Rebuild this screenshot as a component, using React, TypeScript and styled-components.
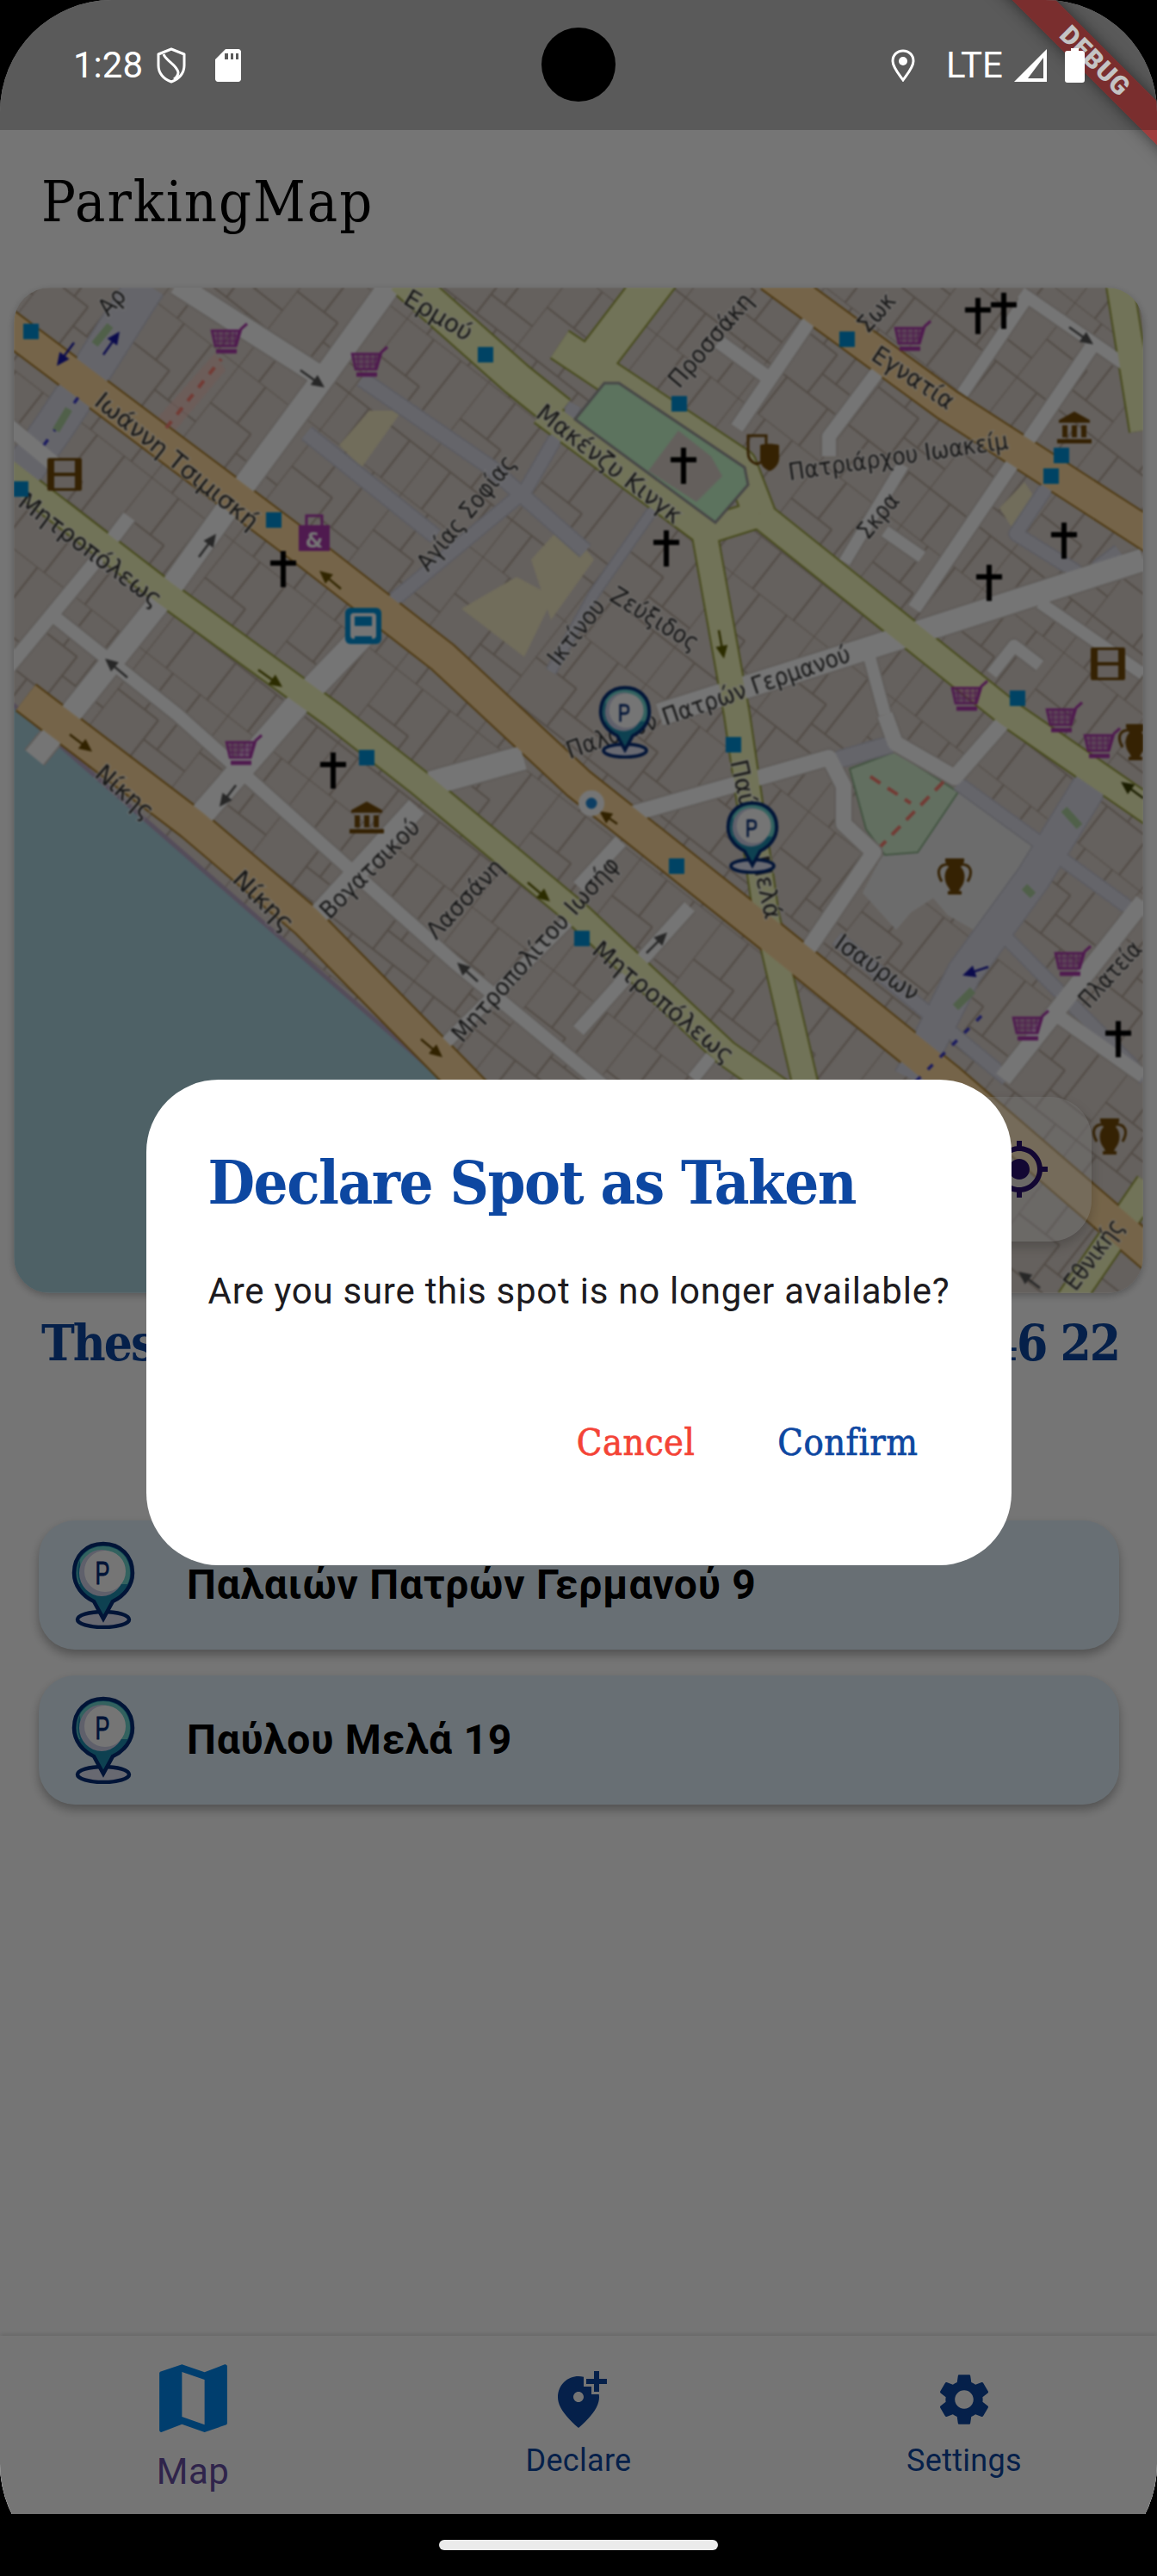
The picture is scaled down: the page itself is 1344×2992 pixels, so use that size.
import React from "react";
import styled, { createGlobalStyle } from "styled-components";

const Global = createGlobalStyle`
  html, body { margin: 0; padding: 0; background: #000; }
  #root { width: 1344px; height: 2992px; }
  * { box-sizing: border-box; }
`;

const SLAB = `"DejaVu Serif Condensed", "DejaVu Serif", serif`;
const NAVY = "#0d47a1";

const Screen = styled.div`
  position: relative;
  width: 1344px;
  height: 2992px;
  overflow: hidden;
  border-radius: 130px;
  background: #000;
  font-family: Roboto, sans-serif;
`;
const Page = styled.div`
  width: 100%;
  height: 2920px;
  padding-top: 151px;
  background: #fff;
  display: flex;
  flex-direction: column;
`;
const AppBar = styled.header`
  height: 168px;
  flex: none;
  padding-left: 48px;
  display: flex;
  align-items: center;
`;
const AppTitle = styled.h1`
  margin: 0;
  font: 400 66px/1 ${SLAB};
  letter-spacing: 2px;
  color: #000;
`;
const MapCard = styled.section`
  position: relative;
  flex: none;
  height: 1168px;
  margin: 15px 16px 0;
  border-radius: 42px;
  overflow: hidden;
  box-shadow: 0 3px 9px rgba(0, 0, 0, 0.25);
`;
const MapSvg = styled.svg`
  display: block;
  width: 1312px;
  height: 1168px;
  filter: blur(0.9px);
`;
const LocateButton = styled.button`
  position: absolute;
  right: 60px;
  bottom: 60px;
  width: 168px;
  height: 168px;
  padding: 0;
  border: 0;
  border-radius: 48px;
  background: rgba(255, 255, 255, 0.38);
  box-shadow: 0 6px 14px rgba(0, 0, 0, 0.2);
  display: flex;
  align-items: center;
  justify-content: center;
  color: #2a1070;
`;
const Headline = styled.h2`
  margin: 22px 44px 0 48px;
  font: 700 58px/72px ${SLAB};
  letter-spacing: -2px;
  color: ${NAVY};
  white-space: nowrap;
  display: flex;
  justify-content: space-between;
`;
const SpotList = styled.ul`
  list-style: none;
  margin: 170px 44px 0 45px;
  padding: 0;
  display: flex;
  flex-direction: column;
  gap: 30px;
`;
const SpotCard = styled.li`
  height: 150px;
  border-radius: 42px;
  background: #e3f2fd;
  box-shadow: 0 6px 12px rgba(0, 0, 0, 0.3);
  padding-left: 38px;
  display: flex;
  align-items: center;
  gap: 60px;
`;
const SpotName = styled.span`
  font: 700 48px/1 Roboto, sans-serif;
  letter-spacing: 0.72px;
  color: #000;
`;
const Grow = styled.div`
  flex: 1;
`;
const BottomNav = styled.nav`
  flex: none;
  height: 207px;
  background: #fff;
  box-shadow: 0 -2px 5px rgba(0, 0, 0, 0.12);
  display: grid;
  grid-template-columns: repeat(3, 1fr);
`;
const NavItem = styled.div<{ $active?: boolean }>`
  display: flex;
  flex-direction: column;
  align-items: center;
  padding-top: ${(p) => (p.$active ? "20px" : "38px")};
  gap: ${(p) => (p.$active ? "9px" : "15px")};
  color: ${NAVY};
`;
const NavLabel = styled.span<{ $active?: boolean }>`
  font: 400 ${(p) => (p.$active ? "42px" : "36px")}/1.15 Roboto, sans-serif;
  letter-spacing: ${(p) => (p.$active ? "0.4px" : "0.3px")};
  color: ${(p) => (p.$active ? "#6750a4" : NAVY)};
`;
const Scrim = styled.div`
  position: absolute;
  inset: 0;
  padding: 151px 0 72px;
  background: rgba(0, 0, 0, 0.54);
  display: flex;
  align-items: center;
  justify-content: center;
`;
const Dialog = styled.div`
  width: 1005px;
  height: 564px;
  border-radius: 84px;
  background: #fff;
  padding: 72px 36px 0 72px;
  display: flex;
  flex-direction: column;
`;
const DialogTitle = styled.h3`
  margin: 0;
  font: 700 70px/96px ${SLAB};
  letter-spacing: -1.5px;
  color: ${NAVY};
  white-space: nowrap;
`;
const DialogBody = styled.p`
  margin: 48px 0 0;
  font: 400 42px/60px Roboto, sans-serif;
  letter-spacing: 0.75px;
  color: #1d1b20;
  white-space: nowrap;
`;
const Actions = styled.div`
  margin-top: 86px;
  padding-right: 36px;
  display: flex;
  justify-content: flex-end;
  gap: 24px;
`;
const ActionButton = styled.button<{ $danger?: boolean }>`
  height: 120px;
  padding: 0 36px;
  border: 0;
  background: none;
  font: 400 43px/1 ${SLAB};
  letter-spacing: 0.5px;
  -webkit-text-stroke: 0.7px currentColor;
  color: ${(p) => (p.$danger ? "#f44336" : NAVY)};
`;
const DebugBanner = styled.div`
  position: absolute;
  left: 1122px;
  top: 53px;
  width: 300px;
  height: 36px;
  transform: rotate(45deg);
  background: rgba(183, 28, 28, 0.63);
  box-shadow: 0 0 18px rgba(0, 0, 0, 0.5);
  color: #fff;
  font: 900 30px/36px Roboto, sans-serif;
  letter-spacing: 1px;
  text-align: center;
`;
const StatusBar = styled.div`
  position: absolute;
  left: 0;
  top: 0;
  width: 100%;
  height: 151px;
  padding: 0 84px 0 85px;
  background: rgba(0, 0, 0, 0.23);
  display: flex;
  align-items: center;
  justify-content: space-between;
  color: #fff;
`;
const StatusGroup = styled.div`
  display: flex;
  align-items: center;
  height: 151px;
`;
const StatusText = styled.span<{ $ml?: number }>`
  margin-left: ${(p) => p.$ml || 0}px;
  font: 400 42px/1 Roboto, sans-serif;
  color: #fff;
`;
const StatusIcon = styled.svg<{ $ml: number }>`
  display: block;
  margin-left: ${(p) => p.$ml}px;
  flex: none;
`;
const Camera = styled.div`
  position: absolute;
  left: 629px;
  top: 32px;
  width: 86px;
  height: 86px;
  border-radius: 50%;
  background: #000;
`;
const SystemNav = styled.div`
  position: absolute;
  left: 0;
  bottom: 0;
  width: 100%;
  height: 72px;
  display: flex;
  justify-content: center;
  padding-top: 30px;
`;
const HomePill = styled.div`
  width: 324px;
  height: 12px;
  border-radius: 6px;
  background: #ebebeb;
`;

type Pt = number[];
const roadColors: Record<string, { fill: string; edge: string }> = {
  ped: { fill: "#dddde8", edge: "#c9c9d4" },
  white: { fill: "#ffffff", edge: "#cfc8c2" },
  sec: { fill: "#f7fabf", edge: "#98a03a" },
  pri: { fill: "#ffdba0", edge: "#a87a25" },
};
const roads: { k: string; w: number; p: Pt }[] = [
  { k: "ped", w: 44, p: [170, 330, 100, 440, 60, 500, 10, 570] },
  { k: "ped", w: 16, p: [420, 440, 570, 543, 680, 640] },
  { k: "ped", w: 16, p: [356, 503, 506, 623] },
  { k: "ped", w: 14, p: [668, 470, 610, 570, 450, 703, 430, 730] },
  { k: "ped", w: 10, p: [760, 590, 690, 690, 640, 780] },
  { k: "ped", w: 18, p: [972, 883, 1040, 863] },
  { k: "ped", w: 14, p: [1113, 910, 1315, 1057] },
  { k: "ped", w: 38, p: [1272, 903, 1200, 1020, 1120, 1130, 1058, 1253] },
  { k: "ped", w: 14, p: [1150, 1070, 1330, 1253] },
  { k: "ped", w: 14, p: [972, 1090, 1070, 1170, 1170, 1253] },
  { k: "ped", w: 14, p: [1220, 560, 1180, 620, 1260, 670, 1300, 640] },
  { k: "white", w: 24, p: [205, 330, 377, 440] },
  { k: "white", w: 26, p: [454, 330, 377, 437, 279, 570, 193, 690, 81, 830, 40, 880] },
  { k: "white", w: 16, p: [10, 775, 107, 657, 150, 600] },
  { k: "white", w: 18, p: [10, 495, 70, 545] },
  { k: "white", w: 15, p: [64, 717, 206, 830, 407, 1010, 527, 1117, 643, 1213, 700, 1260] },
  { k: "white", w: 28, p: [429, 730, 356, 806, 231, 950] },
  { k: "white", w: 24, p: [484, 937, 360, 1073] },
  { k: "white", w: 14, p: [514, 1215, 660, 1070] },
  { k: "white", w: 28, p: [500, 910, 608, 880] },
  { k: "white", w: 18, p: [728, 947, 963, 880, 980, 913, 980, 957, 1015, 990, 929, 1117] },
  { k: "white", w: 26, p: [766, 830, 1058, 737, 1328, 650] },
  { k: "white", w: 18, p: [1028, 830, 1040, 863, 1109, 903, 1173, 830] },
  { k: "white", w: 20, p: [1328, 1047, 1165, 1253] },
  { k: "white", w: 16, p: [1229, 1180, 1328, 1250] },
  { k: "white", w: 16, p: [942, 370, 856, 497] },
  { k: "white", w: 16, p: [835, 397, 890, 437] },
  { k: "white", w: 16, p: [1023, 427, 963, 507, 963, 530] },
  { k: "white", w: 16, p: [1268, 403, 1062, 707] },
  { k: "white", w: 14, p: [1190, 350, 1118, 457] },
  { k: "white", w: 14, p: [1186, 340, 1306, 423] },
  { k: "white", w: 14, p: [1049, 540, 981, 653] },
  { k: "white", w: 14, p: [1028, 617, 1071, 647] },
  { k: "white", w: 14, p: [1208, 700, 1328, 783] },
  { k: "white", w: 14, p: [1208, 773, 1178, 750, 1152, 783] },
  { k: "white", w: 14, p: [1010, 763, 1028, 830] },
  { k: "white", w: 16, p: [801, 1053, 672, 1197] },
  { k: "white", w: 16, p: [721, 977, 672, 1030] },
  { k: "white", w: 14, p: [826, 1227, 805, 1253] },
  { k: "sec", w: 28, p: [5, 545, 193, 690, 386, 830, 488, 910, 672, 1063, 843, 1223, 910, 1270] },
  { k: "sec", w: 38, p: [467, 322, 600, 440, 650, 480] },
  { k: "sec", w: 36, p: [650, 400, 860, 540, 882, 597] },
  { k: "sec", w: 30, p: [630, 478, 818, 617, 882, 597] },
  { k: "sec", w: 30, p: [882, 597, 1173, 830, 1340, 945] },
  { k: "sec", w: 28, p: [818, 617, 856, 830, 890, 1063, 938, 1270] },
  { k: "sec", w: 44, p: [690, 420, 770, 315] },
  { k: "sec", w: 30, p: [1300, 325, 1328, 500] },
  { k: "sec", w: 30, p: [1243, 1510, 1335, 1375] },
  { k: "pri", w: 36, p: [0, 372, 334, 623, 514, 763, 672, 910, 886, 1080, 1100, 1253, 1340, 1460] },
  { k: "pri", w: 36, p: [895, 320, 1100, 470, 1340, 625] },
  { k: "pri", w: 36, p: [30, 810, 223, 957, 356, 1070, 536, 1253, 640, 1360] },
];
const toPts = (p: Pt) => {
  const out: string[] = [];
  for (let i = 0; i < p.length; i += 2) out.push(`${p[i]},${p[i + 1]}`);
  return out.join(" ");
};
const labels: [string, number, number, number, number][] = [
  ["Ιωάννη Τσιμισκή", 113, 463, 296, 610],
  ["Μητροπόλεως", 24, 580, 184, 700],
  ["Ερμού", 471, 345, 546, 390],
  ["Αγίας Σοφίας", 491, 660, 594, 533],
  ["Αρ", 120, 363, 142, 340],
  ["Μακένζυ Κινγκ", 626, 477, 788, 603],
  ["Προσσάκη", 783, 447, 870, 345],
  ["Σωκ", 1002, 383, 1036, 345],
  ["Εγνατία", 1015, 410, 1105, 470],
  ["Πατριάρχου Ιωακείμ", 916, 550, 1171, 513],
  ["Σκρα", 1002, 623, 1040, 577],
  ["Ζεύξιδος", 711, 690, 809, 750],
  ["Ικτίνου", 643, 770, 698, 700],
  ["Παλαιών Πατρών Γερμανού", 659, 874, 987, 760],
  ["Παύλου Μελά", 856, 883, 897, 1067],
  ["Νίκης", 114, 895, 174, 947],
  ["Νίκης", 274, 1017, 336, 1078],
  ["Βογατσικού", 377, 1063, 484, 957],
  ["Λασσάνη", 501, 1087, 581, 1003],
  ["Μητροπολίτου Ιωσήφ", 531, 1207, 715, 1000],
  ["Μητροπόλεως", 691, 1100, 848, 1230],
  ["Ισαύρων", 972, 1093, 1064, 1157],
  ["Πλατεία", 1259, 1167, 1322, 1098],
  ["Εθνικής", 1243, 1496, 1300, 1420],
];
const stops = [
  [36, 385], [564, 412], [318, 604], [984, 394], [789, 469], [1233, 529], [1221, 553],
  [1182, 811], [426, 880], [852, 865], [786, 1006], [676, 1090], [24, 568],
];
const carts = [[266, 395], [429, 422], [1060, 392], [1126, 810], [1236, 835], [283, 873], [1280, 865], [1246, 1118], [1197, 1193]];
const crosses = [[329, 661], [794, 541], [774, 637], [1136, 367], [1166, 361], [1236, 628], [1149, 677], [387, 895], [1299, 1207]];
const arrows: { c: string; p: Pt }[] = [
  { c: "#1a1aa8", p: [86, 398, 66, 425] },
  { c: "#1a1aa8", p: [120, 412, 139, 385] },
  { c: "#555", p: [349, 430, 377, 450] },
  { c: "#555", p: [231, 647, 251, 620] },
  { c: "#555", p: [148, 787, 122, 765] },
  { c: "#6b5200", p: [396, 684, 371, 663] },
  { c: "#5f6000", p: [300, 778, 328, 798] },
  { c: "#555", p: [1242, 380, 1270, 400] },
  { c: "#5f6000", p: [835, 732, 841, 765] },
  { c: "#6b4a00", p: [81, 853, 107, 873] },
  { c: "#555", p: [274, 912, 255, 937] },
  { c: "#5f6000", p: [613, 1025, 639, 1047] },
  { c: "#555", p: [555, 1140, 531, 1118] },
  { c: "#6b4a00", p: [489, 1207, 514, 1228] },
  { c: "#6b4a00", p: [717, 957, 696, 942] },
  { c: "#555", p: [751, 1107, 775, 1083] },
  { c: "#1a1aa8", p: [1148, 1123, 1118, 1133] },
  { c: "#3a3f00", p: [1328, 927, 1302, 908] },
  { c: "#555", p: [1208, 1496, 1183, 1477] },
];
const BROWN = "#734a08";
const PURPLE = "#ac39ac";

const Cart = ({ x, y }: { x: number; y: number }) => (
  <g transform={`translate(${x} ${y})`} stroke={PURPLE} fill="none" strokeWidth={2.5}>
    <path d="M-20 -11H12L8 7H-16Z" fill={PURPLE} fillOpacity={0.45} />
    <path d="M-13 -11V7M-6 -11V7M1 -11V7M7 -11V7M-19 -5H11M-17 1H9" strokeWidth={1.2} />
    <path d="M8 7L14 -13L21 -19" strokeWidth={3} />
    <path d="M-15 13H9" strokeWidth={5} />
  </g>
);
const Cross = ({ x, y }: { x: number; y: number }) => (
  <path transform={`translate(${x} ${y})`} d="M0 -21V21M-15 -7H15" stroke="#000" strokeWidth={6} fill="none" />
);
const Museum = ({ x, y }: { x: number; y: number }) => (
  <g transform={`translate(${x} ${y})`} fill={BROWN}>
    <path d="M0 -19L18 -9V-6H-18V-9Z" />
    <rect x="-14" y="-3" width="6" height="14" />
    <rect x="-3" y="-3" width="6" height="14" />
    <rect x="8" y="-3" width="6" height="14" />
    <rect x="-20" y="13" width="40" height="5" />
  </g>
);
const Film = ({ x, y }: { x: number; y: number }) => (
  <g transform={`translate(${x} ${y})`}>
    <rect x="-20" y="-19" width="40" height="38" fill={BROWN} rx="2" />
    <rect x="-12" y="-16" width="24" height="14" fill="#d9d0c9" />
    <rect x="-12" y="2" width="24" height="14" fill="#d9d0c9" />
  </g>
);
const Vase = ({ x, y }: { x: number; y: number }) => (
  <g transform={`translate(${x} ${y})`}>
    <path
      d="M-11 -21H11V-17L7 -11C13 -6 13 6 7 13L5 17H8V21H-8V17H-5L-7 13C-13 6 -13 -6 -7 -11L-11 -17Z"
      fill={BROWN}
    />
    <path d="M-8 -14C-18 -14 -22 -6 -15 6M8 -14C18 -14 22 -6 15 6" stroke={BROWN} strokeWidth={3} fill="none" />
  </g>
);

const ParkingPin = ({ w, h, x, y }: { w: number; h: number; x?: number; y?: number }) => (
  <svg x={x} y={y} width={w} height={h} viewBox="0 0 74 102">
    <ellipse cx="37" cy="91" rx="30" ry="9" fill="#e2e4f6" stroke="#032c78" strokeWidth="4.5" />
    <path
      d="M37 3C17 3 3 17 3 37C3 52 13 64 26 70L37 90L48 70C61 64 71 52 71 37C71 17 57 3 37 3Z"
      fill="#1f8fb0"
      stroke="#032c78"
      strokeWidth="4.5"
    />
    <path d="M37 6C20 6 6 18 6 37C6 42 7 46 9 50H65C67 46 68 42 68 37C68 18 54 6 37 6Z" fill="#6fd6d0" />
    <path d="M10 22C5 32 6 46 14 56H30C20 50 10 40 10 22Z" fill="#1f8fb0" />
    <ellipse cx="35" cy="37" rx="26" ry="27" fill="#d0d2ea" />
    <circle cx="39" cy="35" r="24" fill="#fff" />
    <text
      x="36"
      y="50"
      textAnchor="middle"
      fontFamily="Liberation Sans, sans-serif"
      fontSize="36"
      textLength="17"
      lengthAdjust="spacingAndGlyphs"
      fill="#032c78"
      stroke="#032c78"
      strokeWidth="0.8"
    >
      P
    </text>
  </svg>
);

const CityMap = () => (
  <MapSvg viewBox="16 334 1312 1168">
    <defs>
      <pattern id="bld" width="120" height="164" patternUnits="userSpaceOnUse" patternTransform="rotate(38)">
        <rect width="120" height="164" fill="#dcd3cc" />
        <path
          d="M0 0H120M0 54H60M60 82H120M0 110H120M0 0V164M40 0V54M80 0V82M60 54V110M30 110V164M90 110V164"
          stroke="#b3a599"
          strokeWidth="2.2"
          fill="none"
        />
      </pattern>
    </defs>
    <rect x="16" y="334" width="1312" height="1168" fill="url(#bld)" />
    <path d="M0 805L514 1253L720 1510H0Z" fill="#aad3df" stroke="#b8a7c4" strokeWidth="5" />
    <path d="M429 477L467 477L420 543L394 517Z" fill="#f6edc6" />
    <path d="M536 707L600 670L643 693L609 763Z" fill="#f6edc6" />
    <path d="M617 650L656 607L690 650L640 720Z" fill="#f6edc6" />
    <path d="M1161 590L1190 560L1208 587L1182 623Z" fill="#f6edc6" />
    <path d="M170 500L250 410L262 430L195 510Z" fill="#f1c7bf" opacity="0.7" />
    <path d="M1113 910L1229 1003L1161 1097L1101 1063L1084 1043L1058 1060L1041 1080L1002 1037L1023 997Z" fill="#ececec" />
    <path d="M987 893L1040 873L1113 920L1066 990L1028 993L1006 963Z" fill="#d6f2d2" stroke="#8fb58c" strokeWidth="2" />
    {roads.map((r, i) => (
      <polyline
        key={`e${i}`}
        points={toPts(r.p)}
        fill="none"
        stroke={roadColors[r.k].edge}
        strokeWidth={r.w + 4}
        strokeLinejoin="round"
      />
    ))}
    {roads.map((r, i) => (
      <polyline
        key={`f${i}`}
        points={toPts(r.p)}
        fill="none"
        stroke={roadColors[r.k].fill}
        strokeWidth={r.w}
        strokeLinejoin="round"
      />
    ))}
    <path d="M668 487L702 445L719 445L865 543L869 563L831 607Z" fill="#c8facc" stroke="#9a9a9a" strokeWidth="3" />
    <path d="M788 500L753 547L809 583L839 553L826 530Z" fill="#d9d0c9" />
    <path d="M1011 902L1058 933M1096 908L1023 983" stroke="#fa8072" strokeWidth="4" strokeDasharray="14 10" fill="none" />
    <path d="M193 497L257 417" stroke="#fa8072" strokeWidth="4" strokeDasharray="10 10" fill="none" />
    <path d="M51 517L92 460M1140 1180L1060 1260" stroke="#3a3ad0" strokeWidth="3.5" strokeDasharray="8 12" fill="none" />
    <path d="M110 400L128 378M65 500L80 475M1236 940L1254 960M1190 1030L1200 1040M1110 1170L1130 1150" stroke="#aed1a0" strokeWidth="9" fill="none" />
    {arrows.map((a, i) => {
      const [x1, y1, x2, y2] = a.p;
      const t = Math.atan2(y2 - y1, x2 - x1) * (180 / Math.PI);
      return (
        <g key={i} transform={`translate(${x2} ${y2}) rotate(${t})`}>
          <path d={`M${-Math.hypot(x2 - x1, y2 - y1)} 0H-6`} stroke={a.c} strokeWidth="2.5" />
          <path d="M0 0L-15 -7V7Z" fill={a.c} />
        </g>
      );
    })}
    {labels.map(([t, x1, y1, x2, y2], i) => (
      <text
        key={i}
        transform={`translate(${x1} ${y1}) rotate(${(Math.atan2(y2 - y1, x2 - x1) * 180) / Math.PI})`}
        textLength={Math.hypot(x2 - x1, y2 - y1)}
        lengthAdjust="spacingAndGlyphs"
        dominantBaseline="middle"
        fontFamily="DejaVu Sans, sans-serif"
        fontSize="28"
        fill="#333"
        stroke="#fff"
        strokeWidth="3"
        strokeOpacity="0.55"
        paintOrder="stroke"
      >
        {t}
      </text>
    ))}
    {stops.map(([x, y], i) => (
      <rect key={i} x={x - 9} y={y - 9} width="18" height="18" fill="#0092da" />
    ))}
    {carts.map(([x, y], i) => (
      <Cart key={i} x={x} y={y} />
    ))}
    {crosses.map(([x, y], i) => (
      <Cross key={i} x={x} y={y} />
    ))}
    <Museum x={1248} y={497} />
    <Museum x={426} y={950} />
    <Film x={75} y={551} />
    <Film x={1287} y={771} />
    <Vase x={1109} y={1018} />
    <Vase x={1319} y={862} />
    <Vase x={1289} y={1320} />
    <g transform="translate(891 527)">
      <path d="M-22 -21H-1V0C-1 7 -8 11 -12 12C-18 10 -22 6 -22 -1Z" fill="none" stroke={BROWN} strokeWidth="3" />
      <path d="M-8 -10C-3 -12 7 -12 14 -10V6C14 13 7 19 3 20C-3 18 -8 13 -8 6Z" fill={BROWN} />
    </g>
    <g transform="translate(365 619)">
      <rect x="-18" y="-9" width="36" height="30" fill={PURPLE} />
      <rect x="-9" y="-20" width="18" height="13" fill="none" stroke={PURPLE} strokeWidth="3" />
      <text x="0" y="17" textAnchor="middle" fontFamily="DejaVu Sans, sans-serif" fontWeight="700" fontSize="24" fill="#fff">
        &amp;
      </text>
    </g>
    <g transform="translate(422 727)">
      <rect x="-21" y="-21" width="42" height="42" rx="6" fill="#0092da" />
      <rect x="-15" y="-15" width="30" height="30" rx="4" fill="#fff" />
      <rect x="-10" y="-11" width="20" height="11" fill="#0092da" />
      <rect x="-10" y="12" width="20" height="6" fill="#0092da" />
    </g>
    <circle cx="687" cy="933" r="15" fill="#fff" />
    <circle cx="687" cy="933" r="6.5" fill="#1e88d8" />
    <ParkingPin x={695} y={796} w={62} h={85} />
    <ParkingPin x={843} y={930} w={62} h={85} />
  </MapSvg>
);

const Mi = ({ d, size, color }: { d: string; size: number; color?: string }) => (
  <svg width={size} height={size} viewBox="0 0 24 24" fill={color || "currentColor"}>
    <path d={d} />
  </svg>
);
const MAP_D =
  "M20.5 3l-.16.03L15 5.1 9 3 3.36 4.9c-.21.07-.36.25-.36.48V20.5c0 .28.22.5.5.5l.16-.03L9 18.9l6 2.1 5.64-1.9c.21-.07.36-.25.36-.48V3.5c0-.28-.22-.5-.5-.5zM15 19l-6-2.11V5l6 2.11V19z";
const ADD_LOC_D =
  "M20 1v3h3v2h-3v3h-2V6h-3V4h3V1h2zm-8 12c1.1 0 2-.9 2-2s-.9-2-2-2-2 .9-2 2 .9 2 2 2zm2-9.75V7h3v3h2.92c.05.39.08.79.08 1.2 0 3.32-2.67 7.25-8 11.8-5.33-4.55-8-8.48-8-11.8C4 6.22 7.8 3 12 3c.68 0 1.35.08 2 .25z";
const SETTINGS_D =
  "M19.14 12.94c.04-.3.06-.61.06-.94 0-.32-.02-.64-.07-.94l2.03-1.58c.18-.14.23-.41.12-.61l-1.92-3.32c-.12-.22-.37-.29-.59-.22l-2.39.96c-.5-.38-1.03-.7-1.62-.94l-.36-2.54c-.04-.24-.24-.41-.48-.41h-3.84c-.24 0-.43.17-.47.41l-.36 2.54c-.59.24-1.13.57-1.62.94l-2.39-.96c-.22-.08-.47 0-.59.22L2.74 8.87c-.12.21-.08.47.12.61l2.03 1.58c-.05.3-.09.63-.09.94s.02.64.07.94l-2.03 1.58c-.18.14-.23.41-.12.61l1.92 3.32c.12.22.37.29.59.22l2.39-.96c.5.38 1.03.7 1.62.94l.36 2.54c.05.24.24.41.48.41h3.84c.24 0 .44-.17.47-.41l.36-2.54c.59-.24 1.13-.56 1.62-.94l2.39.96c.22.08.47 0 .59-.22l1.92-3.32c.12-.22.07-.47-.12-.61l-2.01-1.58zM12 15.6c-1.98 0-3.6-1.62-3.6-3.6s1.62-3.6 3.6-3.6 3.6 1.62 3.6 3.6-1.62 3.6-3.6 3.6z";
const GPS_D =
  "M12 8c-2.21 0-4 1.79-4 4s1.79 4 4 4 4-1.79 4-4-1.79-4-4-4zm8.94 3c-.46-4.17-3.77-7.48-7.94-7.94V1h-2v2.06C6.83 3.52 3.52 6.83 3.06 11H1v2h2.06c.46 4.17 3.77 7.48 7.94 7.94V23h2v-2.06c4.17-.46 7.48-3.77 7.94-7.94H23v-2h-2.06zM12 19c-3.87 0-7-3.13-7-7s3.13-7 7-7 7 3.13 7 7-3.13 7-7 7z";

export default function App() {
  return (
    <Screen>
      <Global />
      <Page>
        <AppBar>
          <AppTitle>ParkingMap</AppTitle>
        </AppBar>
        <MapCard>
          <CityMap />
          <LocateButton aria-label="Locate me">
            <Mi d={GPS_D} size={72} />
          </LocateButton>
        </MapCard>
        <Headline>
          <span>Thessaloniki,</span>
          <span>546 22</span>
        </Headline>
        <SpotList>
          <SpotCard>
            <ParkingPin w={74} h={102} />
            <SpotName>Παλαιών Πατρών Γερμανού 9</SpotName>
          </SpotCard>
          <SpotCard>
            <ParkingPin w={74} h={102} />
            <SpotName>Παύλου Μελά 19</SpotName>
          </SpotCard>
        </SpotList>
        <Grow />
        <BottomNav>
          <NavItem $active>
            <Mi d={MAP_D} size={105} color="#0288f0" />
            <NavLabel $active>Map</NavLabel>
          </NavItem>
          <NavItem>
            <Mi d={ADD_LOC_D} size={72} />
            <NavLabel>Declare</NavLabel>
          </NavItem>
          <NavItem>
            <Mi d={SETTINGS_D} size={72} />
            <NavLabel>Settings</NavLabel>
          </NavItem>
        </BottomNav>
      </Page>
      <Scrim>
        <Dialog>
          <DialogTitle>Declare Spot as Taken</DialogTitle>
          <DialogBody>Are you sure this spot is no longer available?</DialogBody>
          <Actions>
            <ActionButton $danger>Cancel</ActionButton>
            <ActionButton>Confirm</ActionButton>
          </Actions>
        </Dialog>
      </Scrim>
      <DebugBanner>DEBUG</DebugBanner>
      <StatusBar>
        <StatusGroup>
          <StatusText>1:28</StatusText>
          <StatusIcon $ml={15} width="36" height="42" viewBox="0 0 36 42">
            <path
              d="M18 2L33 8V21C33 30 27 37 18 40C9 37 3 30 3 21V8Z"
              fill="none"
              stroke="#fff"
              strokeWidth="3"
              strokeLinejoin="round"
            />
            <path d="M9 8C12 16 24 20 26 29C26 32 24 35 21 37" fill="none" stroke="#fff" strokeWidth="3" />
          </StatusIcon>
          <StatusIcon $ml={33} width="30" height="38" viewBox="0 0 30 38">
            <path
              fillRule="evenodd"
              d="M12 0H27C28.5 0 30 1.5 30 3V35C30 36.5 28.5 38 27 38H3C1.5 38 0 36.5 0 35V12ZM11 5V12H15V5ZM18 5V12H21V5ZM24 5V12H27V5Z"
              fill="#fff"
            />
          </StatusIcon>
        </StatusGroup>
        <StatusGroup>
          <StatusIcon $ml={0} width="28" height="38" viewBox="0 0 28 38">
            <path
              d="M14 2C7 2 2 7 2 14C2 21 9 29 14 36C19 29 26 21 26 14C26 7 21 2 14 2Z"
              fill="none"
              stroke="#fff"
              strokeWidth="3"
            />
            <circle cx="14" cy="14" r="5" fill="#fff" />
          </StatusIcon>
          <StatusText $ml={36}>LTE</StatusText>
          <StatusIcon $ml={13} width="38" height="38" viewBox="0 0 38 38">
            <path fillRule="evenodd" d="M38 0V38H0ZM34 10L16 34H34Z" fill="#fff" />
          </StatusIcon>
          <StatusIcon $ml={21} width="23" height="40" viewBox="0 0 23 40">
            <path d="M7 0H16V3H20C22 3 23 4 23 6V37C23 39 22 40 20 40H3C1 40 0 39 0 37V6C0 4 1 3 3 3H7Z" fill="#fff" />
          </StatusIcon>
        </StatusGroup>
      </StatusBar>
      <Camera />
      <SystemNav>
        <HomePill />
      </SystemNav>
    </Screen>
  );
}
